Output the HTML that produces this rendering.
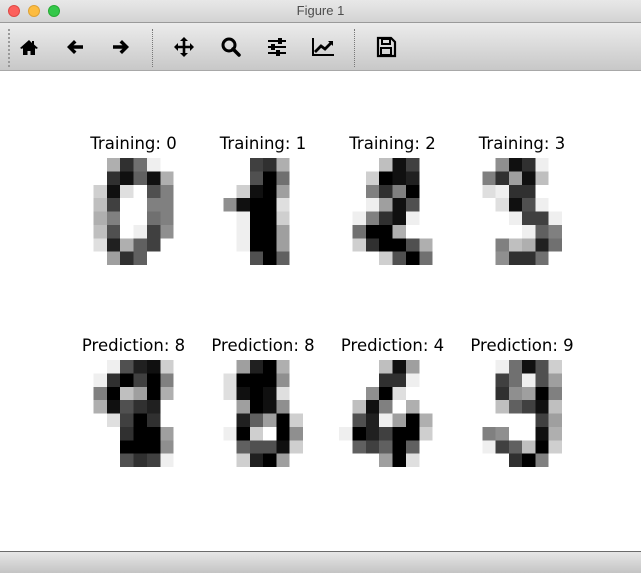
<!DOCTYPE html>
<html><head><meta charset="utf-8"><style>
*{margin:0;padding:0;box-sizing:border-box}
body{width:641px;height:573px;overflow:hidden;background:#fff;font-family:"DejaVu Sans","Liberation Sans",sans-serif;position:relative}
#title{position:absolute;left:0;top:0;width:641px;height:23px;background:linear-gradient(#e8e8e8,#d3d3d3);border-bottom:1px solid #9a9a9a}
#title .t{position:absolute;left:0;width:641px;top:3px;text-align:center;font:13px "Liberation Sans",sans-serif;color:#4d4d4d}
.dot{position:absolute;top:5px;width:12px;height:12px;border-radius:50%}
#tb{position:absolute;left:0;top:23px;width:641px;height:48px;background:linear-gradient(#ececec,#c8c8c8);border-bottom:1px solid #a8a8a8}
.sep{position:absolute;top:6px;height:38px;border-left:1px dotted #777}
.ic{position:absolute;top:13px}
#bot{position:absolute;left:0;top:551px;width:641px;height:22px;background:linear-gradient(#e6e6e6,#c4c4c4);border-top:1px solid #6b6b6b}
.ttl{position:absolute;width:140px;text-align:center;font-size:16.5px;color:#000}
canvas{position:absolute;image-rendering:pixelated}
</style></head><body>
<div id="title"><div class="dot" style="left:8px;background:#fc605c;border:1px solid #de4a45"></div><div class="dot" style="left:28px;background:#fdbc40;border:1px solid #dea235"></div><div class="dot" style="left:48px;background:#34c84a;border:1px solid #27aa35"></div><div class="t">Figure 1</div></div>
<div id="tb">
<div class="sep" style="left:8px;border-left:2px dotted #999"></div>
<div class="sep" style="left:152px"></div>
<div class="sep" style="left:354px"></div>
<svg class="ic" style="left:18px" width="22" height="22" viewBox="0 0 22 22"><path d="M11 4 L2 12 L4 13 L5 12 V19 H9.5 V15 H12.5 V19 H17 V12 L18 13 L20 12 L16 8.5 V5 H14 V7 Z" fill="#000"/></svg>
<svg class="ic" style="left:64px" width="22" height="22" viewBox="0 0 22 22"><path d="M3 11 L10 4 L12.5 6.5 L9.5 9.3 H19 V12.7 H9.5 L12.5 15.5 L10 18 Z" fill="#000"/></svg>
<svg class="ic" style="left:110px" width="22" height="22" viewBox="0 0 22 22"><path d="M19 11 L12 4 L9.5 6.5 L12.5 9.3 H3 V12.7 H12.5 L9.5 15.5 L12 18 Z" fill="#000"/></svg>
<svg class="ic" style="left:173px" width="22" height="22" viewBox="0 0 22 22"><path d="M11 1 L15 5 H12.3 V9.7 H17 V7 L21 11 L17 15 V12.3 H12.3 V17 H15 L11 21 L7 17 H9.7 V12.3 H5 V15 L1 11 L5 7 V9.7 H9.7 V5 H7 Z" fill="#000"/></svg>
<svg class="ic" style="left:220px" width="22" height="22" viewBox="0 0 22 22"><circle cx="9" cy="9" r="6" fill="none" stroke="#000" stroke-width="3"/><path d="M13 13 L19 19" stroke="#000" stroke-width="3.5" stroke-linecap="round"/></svg>
<svg class="ic" style="left:266px" width="22" height="22" viewBox="0 0 22 22"><g fill="#000"><rect x="2" y="4" width="18" height="2"/><rect x="2" y="10" width="18" height="2"/><rect x="2" y="16" width="18" height="2"/><rect x="12" y="2" width="4" height="6"/><rect x="5" y="8" width="4" height="6"/><rect x="10" y="14" width="4" height="6"/></g></svg>
<svg class="ic" style="left:311px" width="24" height="22" viewBox="0 0 24 22"><path d="M2 2 V19 H23" fill="none" stroke="#000" stroke-width="2"/><path d="M4 16 L10 10 L14 13 L21 6" fill="none" stroke="#000" stroke-width="2.8"/><path d="M17 5 H22 V10 Z" fill="#000"/></svg>
<svg class="ic" style="left:375px" width="22" height="22" viewBox="0 0 22 22"><path d="M3 2 H16 L20 6 V20 H3 Z" fill="none" stroke="#000" stroke-width="2.2"/><rect x="7" y="3" width="8" height="5" fill="none" stroke="#000" stroke-width="2"/><rect x="6" y="12" width="10" height="7" fill="none" stroke="#000" stroke-width="2"/></svg>
</div>
<div id="bot"></div>
<div class="ttl" style="left:63.5px;top:134px">Training: 0</div>
<div class="ttl" style="left:193px;top:134px">Training: 1</div>
<div class="ttl" style="left:322.5px;top:134px">Training: 2</div>
<div class="ttl" style="left:452px;top:134px">Training: 3</div>
<div class="ttl" style="left:63.5px;top:336px">Prediction: 8</div>
<div class="ttl" style="left:193px;top:336px">Prediction: 8</div>
<div class="ttl" style="left:322.5px;top:336px">Prediction: 4</div>
<div class="ttl" style="left:452px;top:336px">Prediction: 9</div>
<script>
var D=[
[[0,0,5,13,9,1,0,0],[0,0,13,15,10,15,5,0],[0,3,15,2,0,11,8,0],[0,4,12,0,0,8,8,0],[0,5,8,0,0,9,8,0],[0,4,11,0,1,12,7,0],[0,2,14,5,10,12,0,0],[0,0,6,13,10,0,0,0]],
[[0,0,0,12,13,5,0,0],[0,0,0,11,16,9,0,0],[0,0,3,15,16,6,0,0],[0,7,15,16,16,2,0,0],[0,0,1,16,16,3,0,0],[0,0,1,16,16,6,0,0],[0,0,1,16,16,6,0,0],[0,0,0,11,16,10,0,0]],
[[0,0,0,4,15,12,0,0],[0,0,3,16,15,14,0,0],[0,0,8,13,8,16,0,0],[0,0,1,6,15,11,0,0],[0,1,8,13,15,1,0,0],[0,9,16,16,5,0,0,0],[0,3,13,16,16,11,5,0],[0,0,0,3,11,16,9,0]],
[[0,0,7,15,13,1,0,0],[0,8,13,6,15,4,0,0],[0,2,1,13,13,0,0,0],[0,0,2,15,11,1,0,0],[0,0,0,1,12,12,1,0],[0,0,0,0,1,10,8,0],[0,0,8,4,5,14,9,0],[0,0,7,13,13,9,0,0]],
[[0,0,1,11,14,15,3,0],[0,1,13,16,12,16,8,0],[0,8,16,4,6,16,5,0],[0,5,15,11,13,14,0,0],[0,0,2,12,16,13,0,0],[0,0,0,13,16,16,6,0],[0,0,0,16,16,16,7,0],[0,0,0,11,13,12,1,0]],
[[0,0,6,14,16,5,0,0],[0,2,16,16,16,7,0,0],[0,2,15,16,15,2,0,0],[0,0,6,16,15,7,0,0],[0,0,14,10,6,16,3,0],[0,1,16,3,0,16,7,0],[0,0,10,11,11,15,3,0],[0,0,3,14,16,6,0,0]],
[[0,0,0,4,15,6,0,0],[0,0,0,13,13,1,0,0],[0,0,7,16,2,0,0,0],[0,4,15,8,0,5,0,0],[0,11,14,1,6,16,5,0],[1,16,14,12,16,16,3,0],[0,10,12,10,16,10,0,0],[0,0,0,6,16,2,0,0]],
[[0,0,1,9,15,11,3,0],[0,0,12,9,1,11,6,0],[0,0,13,7,6,16,8,0],[0,0,4,10,12,15,4,0],[0,0,0,0,0,12,6,0],[0,8,7,0,0,15,5,0],[0,1,12,10,4,16,3,0],[0,0,0,13,16,8,0,0]]];
for(var k=0;k<8;k++){var c=document.createElement('canvas');c.width=8;c.height=8;
var x=80+(k%4)*129.6,y=k<4?158.3:360;c.style.left=x+'px';c.style.top=y+'px';c.style.width='106.7px';c.style.height='106.7px';
var g=c.getContext('2d');for(var r=0;r<8;r++)for(var q=0;q<8;q++){var v=Math.round(255-D[k][r][q]*255/16);g.fillStyle='rgb('+v+','+v+','+v+')';g.fillRect(q,r,1,1);}
document.body.appendChild(c);}
</script>
</body></html>
